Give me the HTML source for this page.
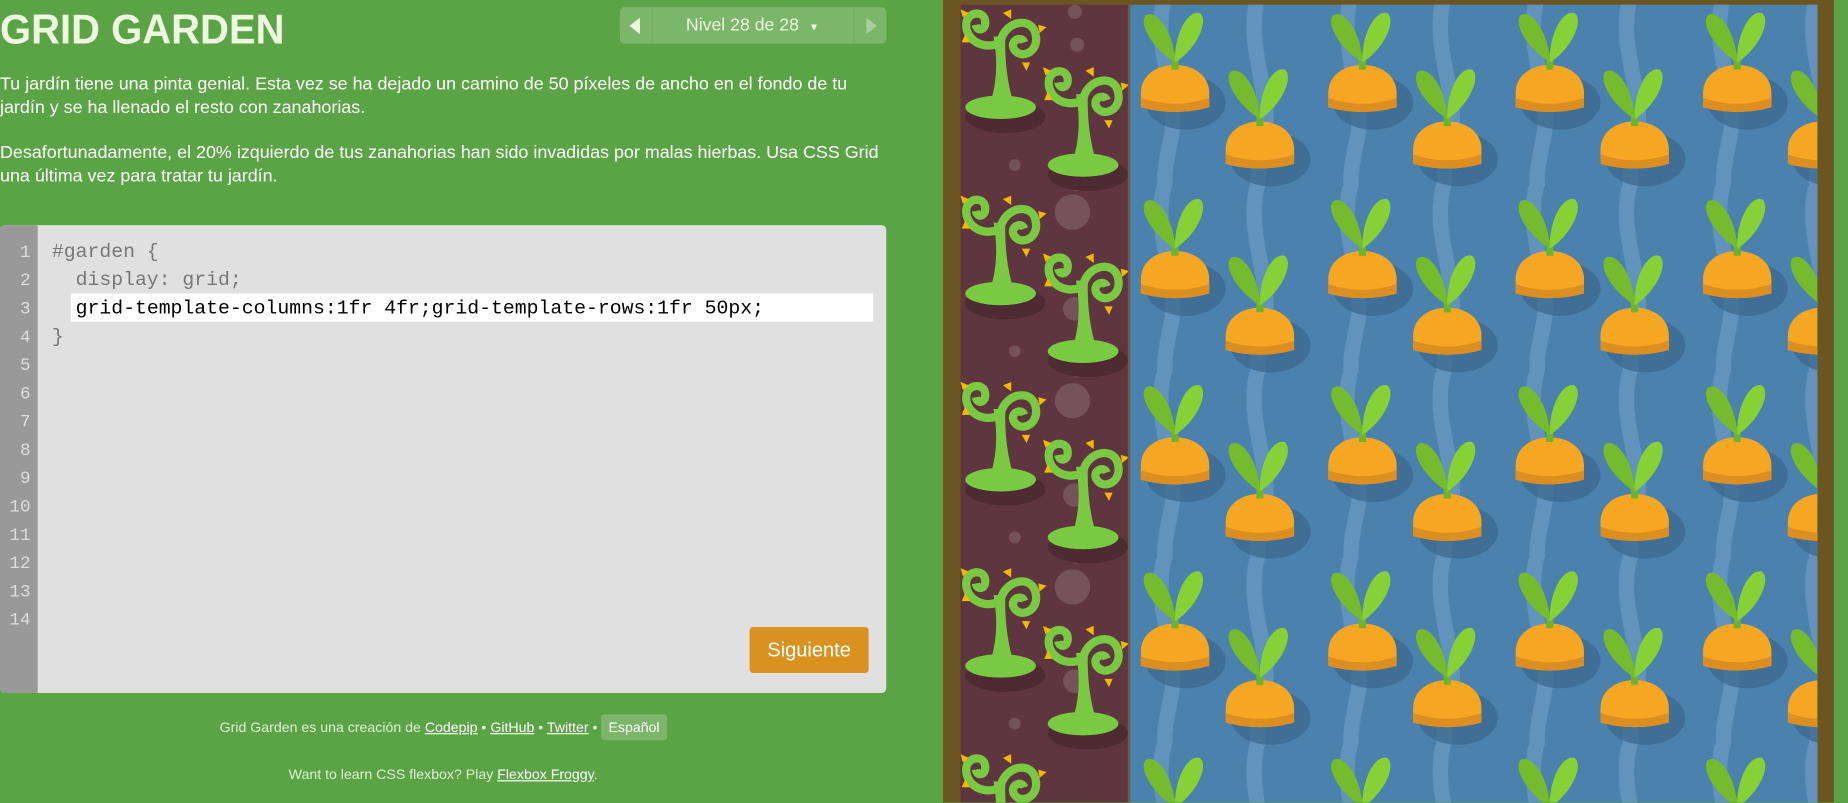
<!DOCTYPE html>
<html><head><meta charset="utf-8">
<style>
html,body{margin:0;padding:0;background:#5ba446;overflow:hidden;width:1848px;height:803px}
#w{position:absolute;left:0;top:0;width:1568px;height:681px;transform:scale(1.17857);transform-origin:0 0;font-family:"Liberation Sans",sans-serif;color:#fff;overflow:hidden}
h1{position:absolute;left:0;top:6px;margin:0;font-size:35px;font-weight:bold;color:#eef7df;letter-spacing:0px;transform:scaleX(0.97);transform-origin:0 0}
.nav{position:absolute;left:526px;top:6px;width:226px;height:31px;background:rgba(255,255,255,0.2);border-radius:4px;font-size:15px}
.nav .l,.nav .r{position:absolute;top:0;width:27px;height:31px}
.nav .l{left:0;border-right:1px solid rgba(0,0,0,0.06)}
.nav .r{right:0;border-left:1px solid rgba(0,0,0,0.06)}
.nav .l:after{content:"";position:absolute;left:8px;top:9px;border-right:9px solid #eef7df;border-top:7px solid transparent;border-bottom:7px solid transparent}
.nav .r:after{content:"";position:absolute;left:10px;top:9px;border-left:9px solid rgba(255,255,255,0.35);border-top:7px solid transparent;border-bottom:7px solid transparent}
.nav .t{position:absolute;left:56px;top:7px;color:#eef7df;white-space:nowrap}
p{position:absolute;left:0;margin:0;font-size:15.2px;line-height:20px;white-space:nowrap;color:#fff}
.ed{position:absolute;left:0;top:191px;width:752px;height:397px;background:#e0e0e0;border-radius:4px;overflow:hidden}
.gut{position:absolute;left:0;top:0;width:32px;height:397px;background:#999}
.ln{position:absolute;left:0;width:26px;text-align:right;font-family:"Liberation Mono",monospace;font-size:15px;color:#ddd}
.code{position:absolute;left:44px;font-family:"Liberation Mono",monospace;font-size:16.8px;color:#777;white-space:pre}
.hl{position:absolute;left:60px;top:58px;width:681px;height:24px;background:#fff}
.btn{position:absolute;left:636px;top:341px;width:101px;height:39px;background:#d9911f;border-radius:3px;font-size:17px;line-height:39px;text-align:center;color:#fff}
.ft{position:absolute;left:0;width:752px;text-align:center;font-size:12px;color:#dfeed6}
.ft u{color:#fff}
.es{display:inline-block;background:rgba(255,255,255,0.2);padding:4px 6px;border-radius:3px;color:#fff}
</style></head><body><div id="w">
<h1>GRID GARDEN</h1>
<div class="nav"><div class="l"></div><div class="t">Nivel 28 de 28 &nbsp;<span style="font-size:9px">▼</span></div><div class="r"></div></div>
<p style="top:62px">Tu jardín tiene una pinta genial. Esta vez se ha dejado un camino de 50 píxeles de ancho en el fondo de tu<br>jardín y se ha llenado el resto con zanahorias.</p>
<p style="top:120px">Desafortunadamente, el 20% izquierdo de tus zanahorias han sido invadidas por malas hierbas. Usa CSS Grid<br>una última vez para tratar tu jardín.</p>
<div class="ed">
<div class="gut"></div>
<div class="hl"></div>
<div class="ln" style="top:12px;line-height:24px">1<br>2<br>3<br>4<br>5<br>6<br>7<br>8<br>9<br>10<br>11<br>12<br>13<br>14</div>
<div class="code" style="top:12px;line-height:24px">#garden {
  display: grid;
  <span style="color:#000">grid-template-columns:1fr 4fr;grid-template-rows:1fr 50px;</span>
}</div>
<div class="btn">Siguiente</div>
</div>
<div class="ft" style="top:606px">Grid Garden es una creación de <u>Codepip</u> • <u>GitHub</u> • <u>Twitter</u> • <span class="es">Español</span></div>
<div class="ft" style="top:650px">Want to learn CSS flexbox? Play <u>Flexbox Froggy</u>.</div>

<svg style="position:absolute;left:800px;top:0" width="768" height="681" viewBox="800 0 768 681">
<defs>
<pattern id="wv" x="959" y="0" width="79" height="158" patternUnits="userSpaceOnUse">
<path d="M30,-5 C16,40 44,80 34,120 C30,140 28,150 30,163" stroke="#6193bd" stroke-width="13" fill="none"/>
</pattern>
<clipPath id="cc"><rect x="959" y="4" width="583" height="677"/></clipPath>
<clipPath id="wc"><rect x="815" y="4" width="142" height="677"/></clipPath>
<g id="c">
<ellipse cx="38" cy="76" rx="34" ry="23" fill="#3c6a90" opacity="0.75"/>
<path d="M0,68 C0,36 58,36 58,68 L58,80 Q29,88 0,80Z" fill="#f5a623"/>
<path d="M0,72 Q29,82 58,72 L58,80 Q29,88 0,80Z" fill="#dc8e20"/>
<rect x="26" y="34" width="6" height="14" fill="#6ab42e"/>
<path d="M29,42 C10,30 -2,10 4,2 C12,-4 28,14 29,42Z" fill="#74bb2e"/>
<path d="M29,42 C28,18 40,-3 50,0 C58,6 48,30 29,42Z" fill="#86d135"/>
</g>
<g id="t">
<ellipse cx="36" cy="90" rx="34" ry="14" fill="#4e2a33"/>
<ellipse cx="32" cy="82" rx="30" ry="10" fill="#7ac943"/>
<path d="M22,82 Q32,55 26,22 L36,22 Q35,55 44,82Z" fill="#7ac943"/>
<path d="M30,28 C14,34 1,22 3,10 C5,0 19,0 19,10 C19,17 12,18 11,12" stroke="#7ac943" stroke-width="7" fill="none"/>
<path d="M32,26 C36,8 60,4 62,22 C64,36 48,42 43,32 C40,25 50,21 52,27" stroke="#7ac943" stroke-width="7" fill="none"/>
<path d="M2,20 l-3,7 l7,0z M34,2 l7,-3 l0,8z M64,12 l7,2 l-6,5z M50,44 l4,7 l3,-7z M0,6 l-2,-7 l7,3z" fill="#f5b800"/>
</g>
</defs>
<rect x="800" y="0" width="768" height="681" fill="#6b5523"/>
<rect x="1556" y="0" width="12" height="681" fill="#5ba446"/>
<rect x="815" y="4" width="142" height="677" fill="#5f3640"/>
<rect x="957" y="4" width="2" height="677" fill="#6b5a50"/>
<rect x="959" y="4" width="583" height="677" fill="#4a81ad"/>
<rect x="959" y="4" width="583" height="677" fill="url(#wv)"/>
<g fill="#fff" opacity="0.14">
<circle cx="914" cy="38" r="6"/><circle cx="861" cy="140" r="5"/><circle cx="910" cy="180" r="15"/><circle cx="912" cy="262" r="10"/><circle cx="914" cy="155" r="7"/><circle cx="861" cy="298" r="5"/><circle cx="910" cy="340" r="15"/><circle cx="912" cy="420" r="10"/><circle cx="914" cy="313" r="7"/><circle cx="861" cy="456" r="5"/><circle cx="910" cy="498" r="15"/><circle cx="912" cy="578" r="10"/><circle cx="914" cy="471" r="7"/><circle cx="861" cy="614" r="5"/><circle cx="912" cy="10" r="6"/>
</g>
<g clip-path="url(#wc)">
<use href="#t" x="817" y="9"/><use href="#t" x="887" y="58"/>
<use href="#t" x="817" y="167"/><use href="#t" x="887" y="216"/>
<use href="#t" x="817" y="325"/><use href="#t" x="887" y="374"/>
<use href="#t" x="817" y="483"/><use href="#t" x="887" y="532"/>
<use href="#t" x="817" y="641"/>
</g>
<g clip-path="url(#cc)">
<use href="#c" x="968" y="11"/><use href="#c" x="1127" y="11"/><use href="#c" x="1286" y="11"/><use href="#c" x="1445" y="11"/>
<use href="#c" x="1040" y="59"/><use href="#c" x="1199" y="59"/><use href="#c" x="1358" y="59"/><use href="#c" x="1517" y="59"/>
<use href="#c" x="968" y="169"/><use href="#c" x="1127" y="169"/><use href="#c" x="1286" y="169"/><use href="#c" x="1445" y="169"/>
<use href="#c" x="1040" y="217"/><use href="#c" x="1199" y="217"/><use href="#c" x="1358" y="217"/><use href="#c" x="1517" y="217"/>
<use href="#c" x="968" y="327"/><use href="#c" x="1127" y="327"/><use href="#c" x="1286" y="327"/><use href="#c" x="1445" y="327"/>
<use href="#c" x="1040" y="375"/><use href="#c" x="1199" y="375"/><use href="#c" x="1358" y="375"/><use href="#c" x="1517" y="375"/>
<use href="#c" x="968" y="485"/><use href="#c" x="1127" y="485"/><use href="#c" x="1286" y="485"/><use href="#c" x="1445" y="485"/>
<use href="#c" x="1040" y="533"/><use href="#c" x="1199" y="533"/><use href="#c" x="1358" y="533"/><use href="#c" x="1517" y="533"/>
<use href="#c" x="968" y="643"/><use href="#c" x="1127" y="643"/><use href="#c" x="1286" y="643"/><use href="#c" x="1445" y="643"/>
</g>
</svg>
</div></body></html>
